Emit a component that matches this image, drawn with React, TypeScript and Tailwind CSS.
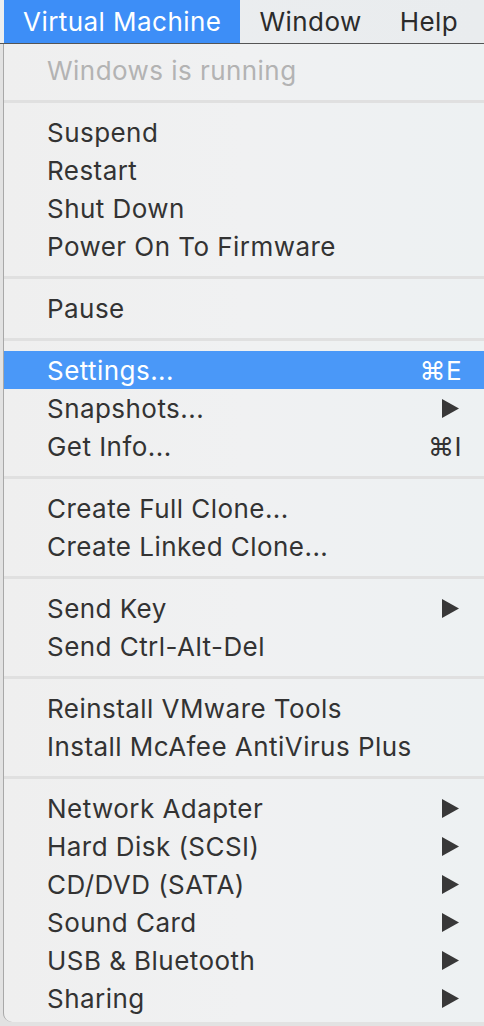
type Item =
  | { kind: 'sep' }
  | { kind: 'item'; label: string; disabled?: boolean; active?: boolean; shortcut?: string; sub?: boolean }

const ITEMS: Item[] = [
  { kind: 'item', label: 'Windows is running', disabled: true },
  { kind: 'sep' },
  { kind: 'item', label: 'Suspend' },
  { kind: 'item', label: 'Restart' },
  { kind: 'item', label: 'Shut Down' },
  { kind: 'item', label: 'Power On To Firmware' },
  { kind: 'sep' },
  { kind: 'item', label: 'Pause' },
  { kind: 'sep' },
  { kind: 'item', label: 'Settings...', shortcut: '⌘E', active: true },
  { kind: 'item', label: 'Snapshots...', sub: true },
  { kind: 'item', label: 'Get Info...', shortcut: '⌘I' },
  { kind: 'sep' },
  { kind: 'item', label: 'Create Full Clone...' },
  { kind: 'item', label: 'Create Linked Clone...' },
  { kind: 'sep' },
  { kind: 'item', label: 'Send Key', sub: true },
  { kind: 'item', label: 'Send Ctrl-Alt-Del' },
  { kind: 'sep' },
  { kind: 'item', label: 'Reinstall VMware Tools' },
  { kind: 'item', label: 'Install McAfee AntiVirus Plus' },
  { kind: 'sep' },
  { kind: 'item', label: 'Network Adapter', sub: true },
  { kind: 'item', label: 'Hard Disk (SCSI)', sub: true },
  { kind: 'item', label: 'CD/DVD (SATA)', sub: true },
  { kind: 'item', label: 'Sound Card', sub: true },
  { kind: 'item', label: 'USB & Bluetooth', sub: true },
  { kind: 'item', label: 'Sharing', sub: true },
]

function SubArrow() {
  return (
    <svg width="17" height="19" viewBox="0 0 17 19" className="shrink-0">
      <path d="M0 0 L17 9.5 L0 19 Z" fill="#383838" />
    </svg>
  )
}

export default function App() {
  return (
    <div className="relative w-[484px] h-[1026px] overflow-hidden bg-[#e2e2e2] text-[26px] tracking-[0.45px]"
      style={{ fontFamily: 'Inter, "Liberation Sans", sans-serif' }}>
      {/* Menu bar */}
      <div className="flex h-[44px] items-stretch border-b border-[#555] bg-gradient-to-r from-[#eceef0] to-[#e9ecee]">
        <div className="w-[4px]" />
        <div className="flex items-center bg-[#3d8ef7] pl-[19px] pr-[19px] text-white">Virtual Machine</div>
        <div className="flex items-center pl-[19px] pr-[19px] text-[#2b2b2b]">Window</div>
        <div className="flex items-center pl-[19px] text-[#2b2b2b]">Help</div>
      </div>

      {/* Dropdown */}
      <div className="ml-[3px] w-[481px] h-[978px] rounded-bl-[9px] border-l border-[#a8a8a8] bg-gradient-to-r from-[#efefef] via-[#f0f1f2] to-[#edf1f2] pt-[7px]">
        {ITEMS.map((it, i) =>
          it.kind === 'sep' ? (
            <div key={i} className="flex h-[24px] items-center">
              <div className="h-[3px] w-full bg-[#e0e0e0]" />
            </div>
          ) : (
            <div key={i}
              className={
                'flex h-[38px] items-center justify-between pl-[43px] ' +
                (it.active ? 'bg-[#4a98f8] text-white ' : it.disabled ? 'text-[#b3b3b3] ' : 'text-[#333] ') +
                (it.sub ? 'pr-[25px]' : 'pr-[22px]')
              }>
              <span>{it.label}</span>
              {it.shortcut && <span>{it.shortcut}</span>}
              {it.sub && <SubArrow />}
            </div>
          )
        )}
      </div>
    </div>
  )
}
